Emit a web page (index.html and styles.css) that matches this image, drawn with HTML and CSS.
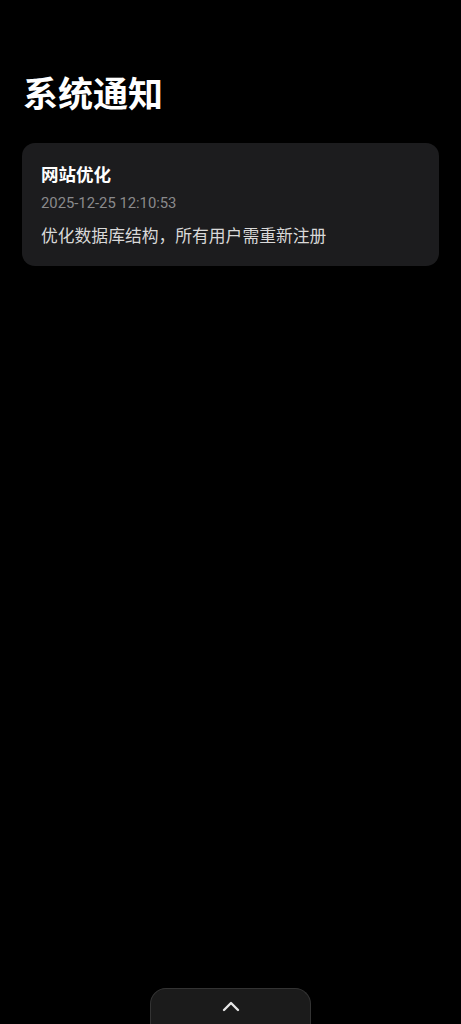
FILE: index.html
```html
<!DOCTYPE html>
<html lang="zh-CN">
<head>
    <meta charset="UTF-8">
    <meta name="viewport" content="width=device-width, initial-scale=1.0">
    <title>系统通知</title>
    <link rel="stylesheet" href="styles.css">
</head>
<body>
    <div class="page">
        <h1 class="page-title">系统通知</h1>
        <ul class="notice-list">
            <li class="notice">
                <div class="notice-title">网站优化</div>
                <div class="notice-time">2025-12-25 12:10:53</div>
                <div class="notice-body">优化数据库结构，所有用户需重新注册</div>
            </li>
        </ul>
        <div class="bottom-tab">
            <svg width="20" height="12" viewBox="0 0 20 12" aria-hidden="true">
                <path d="M3 10 L10 3 L17 10" fill="none" stroke="#e6e6e6" stroke-width="2.4" stroke-linecap="round" stroke-linejoin="round"/>
            </svg>
        </div>
    </div>
</body>
</html>
```

FILE: styles.css
```css
body {
    margin: 0;
    background-color: #000;
    font-family: "Noto Sans CJK SC", "Noto Sans", sans-serif;
    color: #fff;
}

.page {
    display: flex;
    flex-direction: column;
    min-height: 100vh;
    padding: 71px 22px 0;
    box-sizing: border-box;
}

.page-title {
    margin: 0 0 30px 1px;
    font-size: 35px;
    line-height: 42px;
    font-weight: 700;
}

.notice-list {
    list-style: none;
    margin: 0;
    padding: 0;
}

.notice {
    background: #1c1c1e;
    border-radius: 13px;
    padding: 19px 19px 18px;
}

.notice-title {
    font-size: 17.5px;
    line-height: 24px;
    font-weight: 700;
    color: #fff;
}

.notice-time {
    margin-top: 6px;
    font-family: "Roboto", "Noto Sans", sans-serif;
    font-size: 14.8px;
    line-height: 22px;
    color: #8a8a8c;
}

.notice-body {
    margin-top: 9px;
    font-size: 16.8px;
    line-height: 25px;
    color: #d9d9d9;
}

.bottom-tab {
    margin: auto auto 0;
    width: 161px;
    height: 36px;
    background: #1b1b1b;
    border: 1px solid #333;
    border-bottom: none;
    border-radius: 16px 16px 0 0;
    display: flex;
    justify-content: center;
    padding-top: 11px;
    box-sizing: border-box;
}
```
